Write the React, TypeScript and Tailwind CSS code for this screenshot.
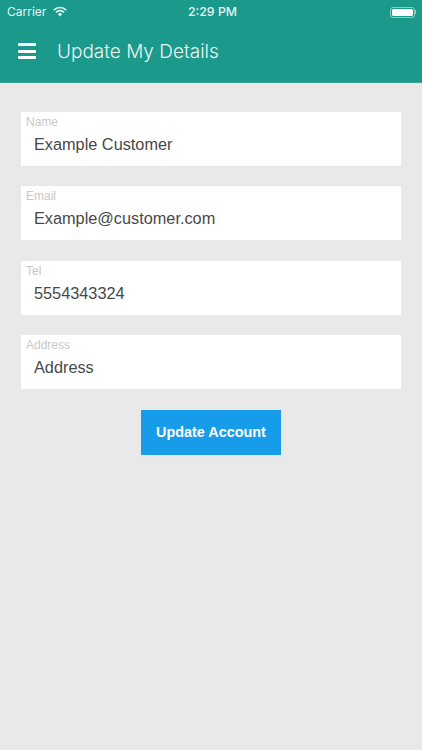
const fields = [
  { label: "Name", value: "Example Customer" },
  { label: "Email", value: "Example@customer.com" },
  { label: "Tel", value: "5554343324" },
  { label: "Address", value: "Address" },
];

function Wifi() {
  return (
    <svg width="14" height="11" viewBox="0 0 15 11" className="ml-[7px] -mt-[2px]" fill="none" stroke="#e8f5f3">
      <path d="M0.8 4 A9.5 9.5 0 0 1 14.2 4" strokeWidth="1.8" />
      <path d="M3.2 6.4 A6 6 0 0 1 11.8 6.4" strokeWidth="1.8" />
      <path d="M7.5 10.8 L5.2 8.3 A3.2 3.2 0 0 1 9.8 8.3 Z" fill="#e8f5f3" stroke="none" />
    </svg>
  );
}

function Battery() {
  return (
    <div className="flex items-center">
      <div className="w-[25px] h-[11px] rounded-[3px] border border-white/50 p-[1px]">
        <div className="w-full h-full bg-white rounded-[1.5px]" />
      </div>
      <div className="w-[1px] h-[4px] bg-white/50" />
    </div>
  );
}

export default function App() {
  return (
    <div className="w-[422px] h-[750px] bg-[#e9e9e9] overflow-hidden font-['Liberation_Sans',sans-serif]">
      <header className="h-[83px] bg-[#1b998b] border-b border-[#3aa99c] text-white">
        <div className="h-[24px] pl-[7px] pr-[6px] grid grid-cols-3 items-center font-['Inter',sans-serif] text-[12px] text-[#e8f5f3]">
          <div className="flex items-center">
            <span>Carrier</span>
            <Wifi />
          </div>
          <div className="text-center font-medium text-[12.3px] pl-[2px]">2:29 PM</div>
          <div className="flex justify-end">
            <Battery />
          </div>
        </div>
        <div className="flex items-center h-[57px] pl-[18px]">
          <div className="flex flex-col gap-[3.5px] w-[18px] mb-[3px]">
            <div className="h-[3px] bg-white rounded-[1px]" />
            <div className="h-[3px] bg-white rounded-[1px]" />
            <div className="h-[3px] bg-white rounded-[1px]" />
          </div>
          <h1 className="ml-[21px] text-[19px] font-light font-['Inter',sans-serif] text-[#e8f5f3]">Update My Details</h1>
        </div>
      </header>
      <main className="pt-[29px] px-[21px] flex flex-col gap-[20.33px]">
        {fields.map((f) => (
          <div key={f.label} className="h-[54px] w-[380px] bg-white pl-[5px] pt-[3px]">
            <div className="text-[12px] leading-[14px] text-[#c8c8c8]">{f.label}</div>
            <div className="pl-[8px] mt-[4px] text-[16.3px] leading-[22px] text-[#484848]">{f.value}</div>
          </div>
        ))}
        <button className="self-center mt-[1px] w-[140px] h-[45px] bg-[#169ce9] text-white text-[14.4px] font-bold">
          Update Account
        </button>
      </main>
    </div>
  );
}
